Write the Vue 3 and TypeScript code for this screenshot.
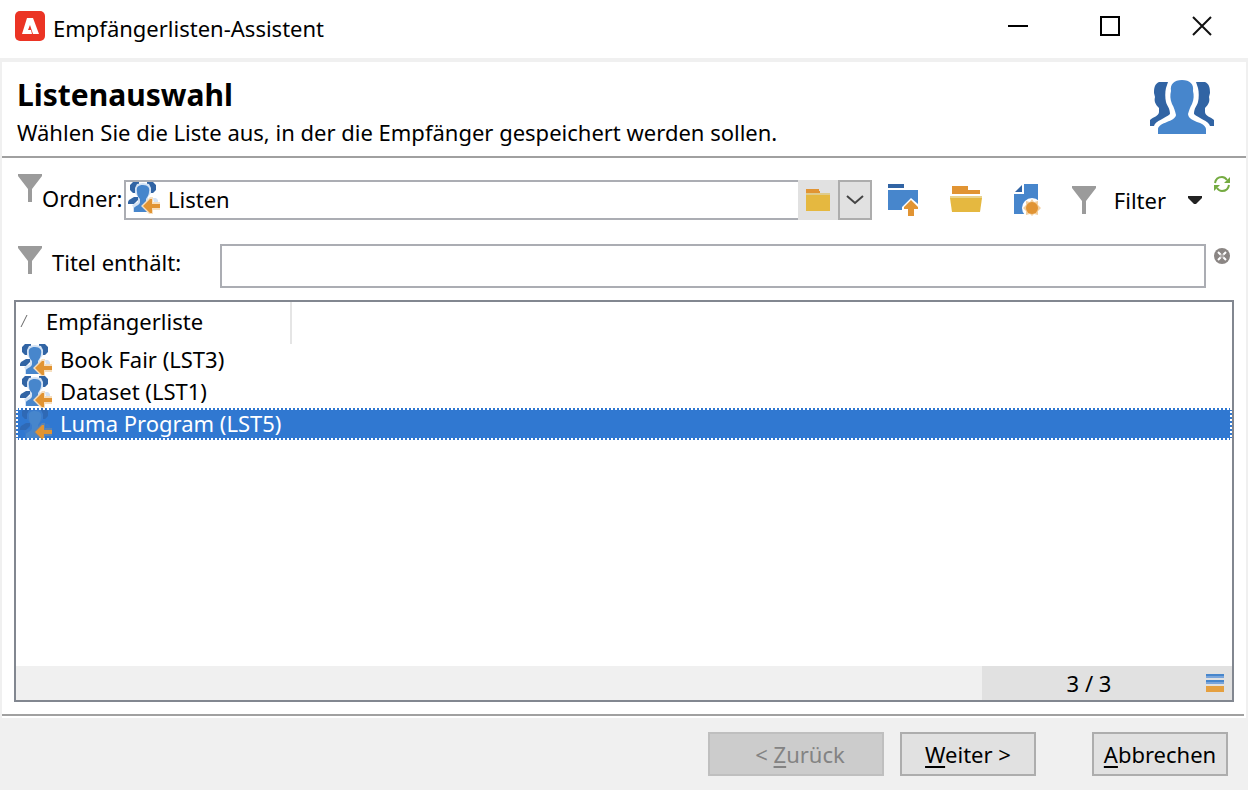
<script setup lang="ts">
import { ref } from 'vue'

interface ListEntry {
  id: string
  label: string
}

const entries: ListEntry[] = [
  { id: 'LST3', label: 'Book Fair (LST3)' },
  { id: 'LST1', label: 'Dataset (LST1)' },
  { id: 'LST5', label: 'Luma Program (LST5)' },
]
const selected = ref('LST5')
const folder = ref('Listen')
const titleFilter = ref('')
</script>

<template>
  <div class="window">
    <svg class="sprite" aria-hidden="true">
      <symbol id="funnel" viewBox="0 0 24 28">
        <path d="M0 0H24V2L14 15V28H10V15L0 2Z" fill="#9b9b9b" />
      </symbol>
      <symbol id="folder" viewBox="0 0 24 22">
        <path d="M0 0H13V2H14V4H0Z" fill="#e19433" />
        <path d="M0 4H24V6H0Z" fill="#dfcb8b" />
        <path d="M0 6H24V22H0Z" fill="#e5b840" />
      </symbol>
      <symbol id="people" viewBox="0 0 32 32">
        <path class="side" d="M5 0H11V4L8 7V11H5L2 8V3Z" />
        <path class="side" d="M19 0H25L28 3V8L25 11H22V7L19 4Z" />
        <path class="side" d="M1 18L6 15H10V18L6 22H0V20Z" />
        <path class="tint" d="M25 16L28 16L30 18V21H26Z" />
        <path class="tint" d="M9 2L15 1L21 2L23 6V11L20 15V18L25 21L23 30H5V25L4 23L10 20V15L7 11V6Z" />
        <path d="M15 3C20 3 22 6 21 10C21 13 19 15 18 17V20C20 22 24 23 24 26V30H6V26C7 24 12 23 12 20V17C10 15 9 13 9 10C8 5 10 3 15 3Z" fill="#4786cc" />
        <path class="glow" d="M13 24L22 15H25V20H32V28H25V32H21Z" />
        <path d="M15 24L22 17H24V22H32V26H24V31H22Z" fill="#e19433" />
      </symbol>
    </svg>

    <header class="titlebar">
      <svg class="logo" width="30" height="30" viewBox="0 0 30 30" aria-hidden="true">
        <rect width="30" height="30" rx="5" fill="#eb3424" />
        <path d="M12 7H18L24 23H18L15 14L13 19H16L17 23H7Z" fill="#fff" />
      </svg>
      <span class="caption">Empfängerlisten-Assistent</span>
      <button class="win-btn" type="button" aria-label="Minimieren">
        <svg width="20" height="20" viewBox="0 0 20 20"><path d="M0 10H20" stroke="#000" stroke-width="2" /></svg>
      </button>
      <button class="win-btn" type="button" aria-label="Maximieren">
        <svg width="20" height="20" viewBox="0 0 20 20"><path d="M1 1H19V19H1Z" fill="none" stroke="#000" stroke-width="2" /></svg>
      </button>
      <button class="win-btn" type="button" aria-label="Schließen">
        <svg width="20" height="20" viewBox="0 0 20 20"><path d="M1 1L19 19M19 1L1 19" stroke="#111" stroke-width="2" /></svg>
      </button>
    </header>

    <main class="body">
      <section class="intro">
        <div class="intro-text">
          <h1>Listenauswahl</h1>
          <p>Wählen Sie die Liste aus, in der die Empfänger gespeichert werden sollen.</p>
        </div>
        <svg width="64" height="54" viewBox="0 0 64 54" aria-hidden="true">
          <path d="M9 2H18L16 8C15 12 15 18 16 22C17 26 20 28 20 34C16 38 5 41 4 46H0V40C3 37 9 36 9 32V28C5 24 4 21 5 17L4 13C4 7 5 4 9 2Z" fill="#3164a4" />
          <path d="M55 2H46L48 8C49 12 49 18 48 22C47 26 44 28 44 34C48 38 59 41 60 46H64V40C61 37 55 36 55 32V28C59 24 60 21 59 17L60 13C60 7 59 4 55 2Z" fill="#3164a4" />
          <path d="M32 0C40 0 44 4 43 11C44 15 44 19 42 24C40 27 39 31 38 34C39 43 55 41 56 49V54H8V49C9 42 25 42 26 35C25 31 24 27 22 24C20 19 20 15 21 11C20 4 24 0 32 0Z" fill="#4786cc" stroke="#fff" stroke-width="6" paint-order="stroke" />
        </svg>
      </section>

      <section class="filters">
        <div class="row folder-row">
          <svg class="row-funnel" width="24" height="28"><use href="#funnel" /></svg>
          <label class="folder-label" for="folder">Ordner:</label>
          <div class="combo">
            <svg class="combo-icon" width="32" height="32"><use href="#people" /></svg>
            <input id="folder" v-model="folder" type="text" />
            <button class="browse" type="button" aria-label="Ordner wählen">
              <svg width="24" height="22"><use href="#folder" /></svg>
            </button>
            <button class="drop" type="button" aria-label="Aufklappen">
              <svg width="18" height="10" viewBox="0 0 18 10"><path d="M1 1L9 8L17 1" fill="none" stroke="#444" stroke-width="2" /></svg>
            </button>
          </div>
          <div class="tools">
            <button type="button" aria-label="Übergeordneter Ordner">
              <svg width="32" height="32" viewBox="0 0 32 32">
                <path d="M0 0H16V4H0Z" fill="#3164a4" />
                <path d="M0 6H30V20L23 14L14 23V26H0Z" fill="#4786cc" />
                <path d="M23 16L30 23V25H26V32H20V25H16V23Z" fill="#e19433" />
              </svg>
            </button>
            <button type="button" aria-label="Ordner öffnen">
              <svg width="32" height="32" viewBox="0 0 32 32">
                <path d="M2 2H18V6H30V10H2Z" fill="#e19433" />
                <path d="M0 12H32V14H0Z" fill="#e9d38e" />
                <path d="M0 14H32L30 28H2Z" fill="#e5b840" />
              </svg>
            </button>
            <button type="button" aria-label="Neu">
              <svg width="30" height="32" viewBox="-2 0 30 32">
                <path d="M1 8L8 1V8Z" fill="#3164a4" />
                <path d="M10 0H24V30H0V10H10Z" fill="#4786cc" />
                <circle cx="18" cy="24" r="10" fill="#fff" />
                <path d="M18 15L20 18L24 17L24 21L27 24L24 27L24 31L20 30L18 32L16 30L12 31L12 27L9 24L12 21L12 17L16 18Z" fill="#f3cf9e" />
                <circle cx="18" cy="24" r="6" fill="#e19433" />
              </svg>
            </button>
            <button class="filter-btn" type="button">
              <svg width="24" height="28"><use href="#funnel" /></svg>
              <span>Filter</span>
              <svg class="caret" width="14" height="8" viewBox="0 0 14 8"><path d="M0 0H14V2L8 8H6L0 2Z" fill="#222" /></svg>
            </button>
          </div>
          <button class="mini" type="button" aria-label="Aktualisieren">
            <svg width="16" height="16" viewBox="0 0 16 16">
              <path d="M1 7Q2 1 8 1Q11 1 13 4M15 9Q14 15 8 15Q5 15 3 12" fill="none" stroke="#75ab42" stroke-width="2" />
              <path d="M16 1V7H10ZM0 15V9H6Z" fill="#75ab42" />
            </svg>
          </button>
        </div>

        <div class="row title-row">
          <svg class="row-funnel" width="24" height="28"><use href="#funnel" /></svg>
          <label class="title-label" for="title-filter">Titel enthält:</label>
          <input id="title-filter" v-model="titleFilter" class="title-input" type="text" />
          <button class="mini" type="button" aria-label="Filter löschen">
            <svg width="16" height="16" viewBox="0 0 16 16">
              <circle cx="8" cy="8" r="8" fill="#8b8684" />
              <path d="M4 4L12 12M12 4L4 12" stroke="#fff" stroke-width="2" />
              <circle cx="8" cy="8" r="2" fill="#aaa6a4" />
            </svg>
          </button>
        </div>
      </section>

      <section class="list">
        <table>
          <thead>
            <tr>
              <th scope="col">
                <div class="head-cell">
                  <svg width="8" height="12" viewBox="0 0 8 12"><path d="M1 12L7 0" stroke="#666" stroke-width="1" /></svg>
                  <span>Empfängerliste</span>
                </div>
              </th>
            </tr>
          </thead>
          <tbody>
            <tr
              v-for="entry in entries"
              :key="entry.id"
              :class="{ selected: entry.id === selected }"
              @click="selected = entry.id"
            >
              <td>
                <div class="cell">
                  <svg width="32" height="32"><use href="#people" /></svg>
                  <span>{{ entry.label }}</span>
                </div>
              </td>
            </tr>
          </tbody>
        </table>
        <footer class="status">
          <div class="counter">
            <span>3 / 3</span>
            <svg width="18" height="18" viewBox="0 0 18 18" aria-hidden="true">
              <path d="M0 0H18V2H0ZM0 6H18V8H0Z" fill="#4786cc" />
              <path d="M0 2H18V4H0ZM0 8H18V10H0Z" fill="#79a5db" />
              <path d="M0 12H18V18H0Z" fill="#e5a040" />
            </svg>
          </div>
        </footer>
      </section>
      <div class="rule"></div>
    </main>

    <footer class="actions">
      <button class="back" type="button" disabled>&lt; <u>Z</u>urück</button>
      <button class="next" type="button"><u>W</u>eiter &gt;</button>
      <button class="cancel" type="button"><u>A</u>bbrechen</button>
    </footer>
  </div>
</template>

<style>
body {
  margin: 0;
  background: #f0f0f0;
}
</style>

<style scoped>
* {
  box-sizing: border-box;
}
.window {
  --side: #3164a4;
  --tint: #d3e2f4;
  --glow: #f6dfc0;
  display: flex;
  flex-direction: column;
  min-height: 100vh;
  background: #f0f0f0;
  color: #000;
  font-family: 'Noto Sans', 'Open Sans', sans-serif;
  font-size: 22px;
  line-height: 32px;
}
.sprite {
  position: absolute;
  width: 0;
  height: 0;
}
.side {
  fill: var(--side);
}
.tint {
  fill: var(--tint);
}
.glow {
  fill: var(--glow);
}
svg {
  display: block;
  flex: none;
}
button,
input {
  font: inherit;
  color: inherit;
}
button {
  padding: 0;
  border: 0;
  background: none;
}
.titlebar {
  display: flex;
  align-items: center;
  height: 58px;
  padding: 0 0 6px 15px;
  background: #fff;
}
.caption {
  flex: 1;
  margin-left: 8px;
  padding-top: 4px;
}
.win-btn {
  display: flex;
  align-items: center;
  justify-content: center;
  width: 92px;
  height: 52px;
}
.body {
  display: flex;
  flex: 1;
  flex-direction: column;
  margin: 4px 2px 0;
  padding-bottom: 2px;
  background: #fff;
}
.intro {
  display: flex;
  align-items: center;
  justify-content: space-between;
  height: 96px;
  padding: 0 32px 4px 15px;
  border-bottom: 2px solid #a0a0a0;
}
.intro-text {
  padding-top: 8px;
}
h1 {
  margin: 0;
  font-size: 30px;
  line-height: 42px;
}
p {
  margin: 0;
}
.filters {
  padding: 14px 16px 0;
}
.row {
  display: flex;
  align-items: flex-start;
}
.folder-row {
  height: 72px;
}
.title-row {
  height: 56px;
}
.row-funnel {
  margin-top: 2px;
}
.folder-label {
  width: 82px;
  padding-top: 10px;
  white-space: nowrap;
}
.combo {
  display: flex;
  flex: 1;
  height: 40px;
  margin-top: 8px;
  border: 2px solid #abadb3;
  border-right: 0;
}
.combo-icon {
  margin-left: 2px;
}
.combo input {
  flex: 1;
  min-width: 0;
  padding: 0 8px 2px;
  border: 0;
  outline: 0;
  background: #fff;
}
.browse,
.drop {
  display: flex;
  align-items: center;
  justify-content: center;
  height: 40px;
  margin-top: -2px;
  background: #e1e1e1;
}
.browse {
  width: 40px;
}
.drop {
  width: 34px;
  border: 2px solid #adadad;
}
.tools {
  display: flex;
  gap: 30px;
  margin: 12px 12px 0 16px;
}
.filter-btn {
  display: flex;
  align-items: center;
}
.filter-btn span {
  margin: 0 22px 0 18px;
}
.mini {
  margin: 4px 0 0;
}
.title-label {
  width: 178px;
  padding: 2px 0 0 10px;
}
.title-input {
  flex: 1;
  min-width: 0;
  height: 44px;
  margin-right: 8px;
  padding: 0 8px;
  border: 2px solid #abadb3;
  outline: 0;
}
.list {
  display: flex;
  flex: 1;
  flex-direction: column;
  margin: 0 12px 12px;
  border: 2px solid #828790;
}
.rule {
  height: 2px;
  margin-right: 2px;
  background: #a0a0a0;
}
table {
  width: 100%;
  border-collapse: collapse;
}
th,
td {
  padding: 0;
  font-weight: 400;
  text-align: left;
}
.head-cell {
  display: flex;
  align-items: center;
  gap: 18px;
  width: 276px;
  height: 42px;
  padding: 0 0 4px 4px;
  border-right: 2px solid #e5e5e5;
}
.cell {
  display: flex;
  height: 32px;
  gap: 8px;
  padding-left: 4px;
  line-height: 30px;
}
.selected .cell {
  --side: #2f69b5;
  --tint: #3a7bcc;
  --glow: #5a83b4;
  background: #3078d1;
  color: #fff;
  outline: 2px dotted #fff;
  outline-offset: -2px;
}
.status {
  display: flex;
  justify-content: flex-end;
  height: 34px;
  margin-top: auto;
  background: #f0f0f0;
}
.counter {
  display: flex;
  align-items: center;
  width: 250px;
  padding-right: 8px;
  background: #e1e1e1;
}
.counter span {
  flex: 1;
  padding-right: 10px;
  text-align: center;
}
.actions {
  display: flex;
  justify-content: flex-end;
  gap: 16px;
  padding: 14px 20px;
}
.actions button {
  width: 136px;
  height: 44px;
  border: 2px solid #adadad;
  background: #e1e1e1;
}
.actions .back {
  width: 176px;
  padding-left: 8px;
  border-color: #bfbfbf;
  background: #ccc;
  color: #838383;
}
.actions .cancel {
  margin-left: 40px;
}
u {
  text-decoration-thickness: 2px;
  text-underline-offset: 3px;
}
</style>
